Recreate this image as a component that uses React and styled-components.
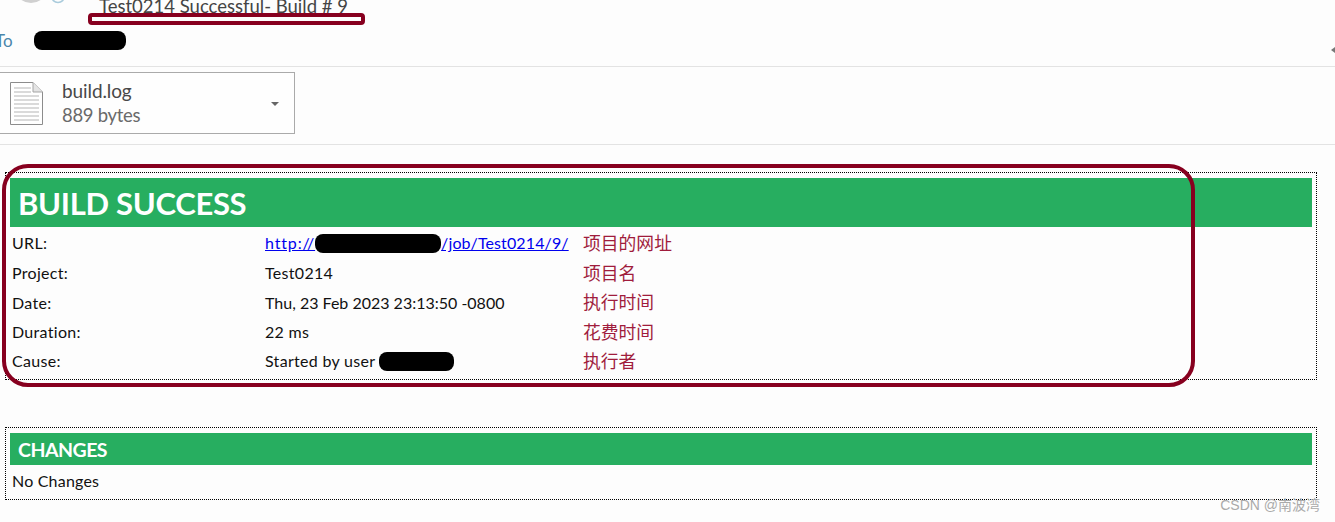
import React from "react";
import styled, { createGlobalStyle } from "styled-components";

const GlobalStyle = createGlobalStyle`
  html, body {
    margin: 0;
    padding: 0;
    background: #fdfdfd;
  }
`;

const Page = styled.div`
  position: relative;
  width: 1335px;
  height: 522px;
  overflow: hidden;
  background: #fdfdfd;
  font-family: Lato, "Noto Sans CJK SC", sans-serif;
  color: #111;
`;

const MailHeader = styled.header`
  height: 66px;
  border-bottom: 1px solid #e3e3e3;
  box-sizing: content-box;
`;

const SubjectRow = styled.div`
  display: flex;
  align-items: flex-end;
  height: 18px;
  overflow: hidden;
`;

const Avatar = styled.svg`
  flex: none;
  align-self: flex-start;
  width: 99px;
  height: 6px;
`;

const Subject = styled.div`
  font-size: 18.5px;
  line-height: 24px;
  color: #444;
  white-space: nowrap;
`;

const ToRow = styled.div`
  display: flex;
  align-items: center;
  height: 19px;
  margin-top: 13px;
  margin-left: -5px;
`;

const ToLabel = styled.span`
  width: 39px;
  font-size: 17px;
  color: #4a86ab;
`;

const Redaction = styled.span`
  display: inline-block;
  flex: none;
  width: ${(p) => p.$width}px;
  height: 19px;
  margin: -6px 0 -6px ${(p) => p.$gap || 0}px;
  border-radius: 8px;
  background: #000;
  vertical-align: 2px;
`;

const AttachmentBar = styled.section`
  height: 72px;
  padding-top: 5px;
  border-bottom: 1px solid #e3e3e3;
`;

const AttachmentCard = styled.div`
  display: flex;
  align-items: center;
  box-sizing: border-box;
  width: 296px;
  height: 62px;
  margin-left: -1px;
  padding: 0 15px 0 10px;
  border: 1px solid #aaa;
  background: #fefefe;
`;

const FileIcon = styled.svg`
  flex: none;
  width: 33px;
  height: 43px;
  margin-right: 19px;
`;

const FileText = styled.div`
  flex: 1;
`;

const FileName = styled.div`
  font-size: 19px;
  line-height: 25px;
  letter-spacing: -0.1px;
  color: #484848;
`;

const FileSize = styled.div`
  font-size: 18.5px;
  line-height: 25px;
  letter-spacing: -0.3px;
  color: #6a6a6a;
`;

const Caret = styled.span`
  width: 0;
  height: 0;
  margin-top: 1px;
  border-left: 4px solid transparent;
  border-right: 4px solid transparent;
  border-top: 4px solid #666;
`;

const Report = styled.main`
  display: flex;
  flex-direction: column;
  gap: 47px;
  width: 1312px;
  margin: 27px 0 0 5px;
`;

const DottedBox = styled.section`
  box-sizing: border-box;
  height: ${(p) => p.$height}px;
  padding: 5px 4px 0;
  border: 1px dotted #000;
`;

const Banner = styled.h1`
  box-sizing: border-box;
  height: 49px;
  margin: 0;
  padding-left: 8px;
  background: #27ae60;
  color: #fff;
  font-size: 31px;
  font-weight: 700;
  line-height: 50px;
  letter-spacing: -0.3px;
`;

const SubBanner = styled.h2`
  box-sizing: border-box;
  height: 32px;
  margin: 0;
  padding-left: 8px;
  background: #27ae60;
  color: #fff;
  font-size: 19.5px;
  font-weight: 700;
  line-height: 33px;
  letter-spacing: -0.5px;
`;

const InfoRow = styled.div`
  display: grid;
  grid-template-columns: 253px 318px 1fr;
  align-items: center;
  height: 29.3px;
  padding-left: 2px;
  font-size: 16px;
  letter-spacing: 0.3px;
  white-space: nowrap;

  &:first-child {
    height: 31.3px;
  }
`;

const DateValue = styled.span`
  letter-spacing: 0;
`;

const Link = styled.a`
  color: #0000ee;
  letter-spacing: 0.12px;
  text-decoration: underline;
`;

const Scheme = styled.span`
  letter-spacing: 0.85px;
`;

const Note = styled.span`
  margin-top: -2px;
  font-size: 17.8px;
  letter-spacing: 0;
  color: #a01c3c;
`;

const PlainLine = styled.div`
  padding: 4px 0 0 2px;
  font-size: 16px;
  line-height: 24px;
  letter-spacing: 0.2px;
`;

const Highlight = styled.div`
  position: absolute;
  box-sizing: border-box;
  left: ${(p) => p.$left}px;
  top: ${(p) => p.$top}px;
  width: ${(p) => p.$width}px;
  height: ${(p) => p.$height}px;
  border: ${(p) => p.$stroke}px solid #87001f;
  border-radius: ${(p) => p.$radius}px;
  pointer-events: none;
`;

const Watermark = styled.div`
  position: absolute;
  right: 15px;
  top: 497px;
  font-family: "Liberation Sans", "Noto Sans CJK SC", sans-serif;
  font-size: 14px;
  line-height: 16px;
  color: #aaa;
`;

const EdgeArrow = styled.span`
  position: absolute;
  right: 0;
  top: 47px;
  width: 0;
  height: 0;
  border-top: 3px solid transparent;
  border-bottom: 3px solid transparent;
  border-right: 4px solid #777;
`;

function App() {
  return (
    <Page>
      <GlobalStyle />
      <MailHeader>
        <SubjectRow>
          <Avatar viewBox="0 0 99 6">
            <ellipse cx="31" cy="-12" rx="16" ry="15" fill="#d0d0d0" />
            <circle cx="58" cy="-4" r="6.5" fill="none" stroke="#a9cbdc" strokeWidth="1.5" />
          </Avatar>
          <Subject>Test0214 Successful- Build # 9</Subject>
        </SubjectRow>
        <ToRow>
          <ToLabel>To</ToLabel>
          <Redaction $width={92} />
        </ToRow>
      </MailHeader>

      <AttachmentBar>
        <AttachmentCard>
          <FileIcon viewBox="0 0 33 43">
            <path d="M0.5 0.5H23L32.5 10V42.5H0.5Z" fill="#fff" stroke="#8c8c8c" />
            <path d="M23 0.5V10H32.5" fill="#e4e4e4" stroke="#a5a5a5" />
            <path
              d="M4 6H21M4 10H21M4 14H29M4 18H29M4 22H29M4 26H29M4 30H29M4 34H29M4 38H29"
              stroke="#b5b5b5"
              strokeWidth="1"
            />
          </FileIcon>
          <FileText>
            <FileName>build.log</FileName>
            <FileSize>889 bytes</FileSize>
          </FileText>
          <Caret />
        </AttachmentCard>
      </AttachmentBar>

      <Report>
        <DottedBox $height={208}>
          <Banner>BUILD SUCCESS</Banner>
          <div>
            <InfoRow>
              <span>URL:</span>
              <span>
                <Link href="#">
                  <Scheme>http://</Scheme>
                  <Redaction $width={126} />
                  /job/Test0214/9/
                </Link>
              </span>
              <Note>项目的网址</Note>
            </InfoRow>
            <InfoRow>
              <span>Project:</span>
              <span>Test0214</span>
              <Note>项目名</Note>
            </InfoRow>
            <InfoRow>
              <span>Date:</span>
              <DateValue>Thu, 23 Feb 2023 23:13:50 -0800</DateValue>
              <Note>执行时间</Note>
            </InfoRow>
            <InfoRow>
              <span>Duration:</span>
              <span>22 ms</span>
              <Note>花费时间</Note>
            </InfoRow>
            <InfoRow>
              <span>Cause:</span>
              <span>
                Started by user
                <Redaction $width={75} $gap={4} />
              </span>
              <Note>执行者</Note>
            </InfoRow>
          </div>
        </DottedBox>

        <DottedBox $height={73}>
          <SubBanner>CHANGES</SubBanner>
          <PlainLine>No Changes</PlainLine>
        </DottedBox>
      </Report>

      <Highlight $left={88} $top={13} $width={277} $height={12} $stroke={4} $radius={4} />
      <Highlight $left={2} $top={164} $width={1193} $height={223} $stroke={4} $radius={26} />
      <EdgeArrow />
      <Watermark>CSDN @南波湾</Watermark>
    </Page>
  );
}

export default App;
